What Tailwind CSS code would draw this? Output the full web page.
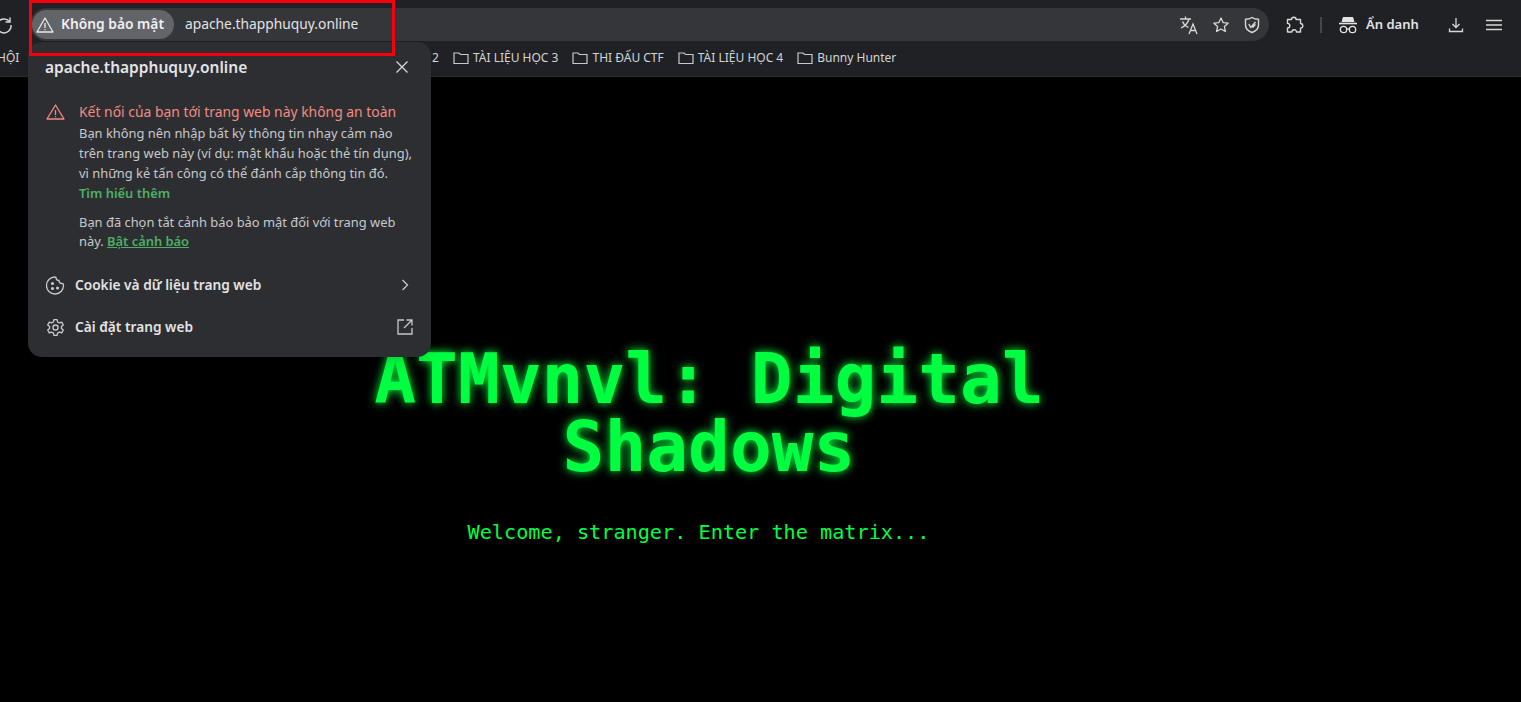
<!DOCTYPE html>
<html lang="vi">
<head>
    <meta charset="UTF-8">
    <meta name="viewport" content="width=device-width, initial-scale=1.0">
    <title>ATMvnvl: Digital Shadows</title>
    <script src="https://cdn.jsdelivr.net/npm/@tailwindcss/browser@4"></script>
</head>
<body class="h-screen overflow-hidden bg-black font-['Noto_Sans',sans-serif]">
    <div class="relative h-[702px] w-[1521px] overflow-hidden">
        <!-- browser chrome -->
        <header class="h-[77px] bg-[#202124] border-b border-[#2b2c2f] text-[#e3e3e3]">
            <div class="flex items-center h-[41px] pt-2">
                <svg class="w-5 h-5 ml-[-6px] shrink-0" viewBox="0 0 20 20" fill="none" stroke="#d5d6d8" stroke-width="1.5"><path d="M15.5 6.5A7 7 0 1 0 17 10"/><path d="M16 2.5v4.5h-4.5"/></svg>
                <!-- omnibox -->
                <div class="ml-[16px] w-[1239px] h-[33px] rounded-full bg-[#35363a] flex items-center pl-[2px] pr-[8px]">
                    <div class="flex items-center h-[29px] w-[142px] rounded-full bg-[#62646a] pl-[4px] gap-[7px]">
                        <svg class="w-[18px] h-[18px] shrink-0" viewBox="0 0 18 18" fill="none" stroke="#e8e8e8" stroke-width="1.3" stroke-linejoin="round"><path d="M9 2 17 16H1Z"/><path d="M9 7v5M9 13.2v1"/></svg>
                        <span class="text-[13.8px] font-semibold text-[#f0f0f0] whitespace-nowrap">Không bảo mật</span>
                    </div>
                    <span class="ml-[11px] text-[13.8px] text-[#e3e3e3] whitespace-nowrap">apache.thapphuquy.online</span>
                    <div class="ml-auto flex items-center gap-[13px]">
                        <svg class="w-[20px] h-[20px]" viewBox="0 0 20 20" fill="none" stroke="#d8d8d8" stroke-width="1.3"><path d="M1 4h11M6.5 1.5V4M10 4c-1 4-4 7-8 9M3.5 6.5c1.2 3 3.5 5 6 6"/><path d="M10 19l4-10 4 10M11.5 15.5h5"/></svg>
                        <svg class="w-[18px] h-[18px]" viewBox="0 0 18 18" fill="none" stroke="#d8d8d8" stroke-width="1.3" stroke-linejoin="round"><path d="m9 2 2.1 4.6 5 .6-3.7 3.4 1 4.9L9 13l-4.4 2.5 1-4.9-3.7-3.4 5-.6Z"/></svg>
                        <svg class="w-[18px] h-[18px]" viewBox="0 0 18 18" fill="none" stroke="#d8d8d8" stroke-width="1.4" stroke-linejoin="round"><path d="M9 1.500c2 1.300 4 1.800 6.500 1.800V9c0 3.600-2.600 6-6.500 7.500C5.100 15 2.500 12.600 2.500 9V3.300C5 3.300 7 2.800 9 1.500Z"/><path d="m5.800 8 2 3.500L12.500 6M9.500 11.500l3-3"/></svg>
                    </div>
                </div>
                <svg class="ml-[15px] w-[20px] h-[20px]" viewBox="0 0 20 20" fill="none" stroke="#d8d8d8" stroke-width="1.4" stroke-linejoin="round"><path d="M7.500 4.500a2.300 2.300 0 0 1 4.600 0h4.400v4a2.300 2.300 0 0 1 0 4.600v3.900h-4a2.300 2.300 0 0 0-4.600 0H3.500v-4a2.300 2.300 0 0 0 0-4.600v-3.900Z"/></svg>
                <div class="ml-[16px] w-[2px] h-[16px] bg-[#45474a]"></div>
                <svg class="ml-[16px] w-[20px] h-[18px]" viewBox="0 0 20 18" fill="none"><path d="M5 1h10l1.500 5h-13Z" fill="#e3e3e3"/><path d="M1 7.500h18" stroke="#e3e3e3" stroke-width="1.600"/><circle cx="5.500" cy="13.500" r="3.200" stroke="#e3e3e3" stroke-width="1.300"/><circle cx="14.500" cy="13.500" r="3.200" stroke="#e3e3e3" stroke-width="1.300"/><path d="M8.700 13h2.600" stroke="#e3e3e3" stroke-width="1.300"/></svg>
                <span class="ml-[8px] text-[13px] font-semibold whitespace-nowrap">Ẩn danh</span>
                <svg class="ml-[29px] w-[16px] h-[16px]" viewBox="0 0 16 16" fill="none" stroke="#d8d8d8" stroke-width="1.300"><path d="M8 1v9M4.500 7 8 10.500 11.500 7M1.500 11.500v3h13v-3"/></svg>
                <svg class="ml-[22px] w-[16px] h-[12px]" viewBox="0 0 16 12" fill="none" stroke="#d8d8d8" stroke-width="1.500"><path d="M0 1.500h16M0 6h16M0 10.500h16"/></svg>
            </div>
            <!-- bookmarks bar -->
            <nav class="flex items-center h-[33px] text-[12px] text-[#d4d5d7] whitespace-nowrap">
                <span class="ml-[-3px] w-[20px] shrink-0">HỘI</span>
                <span class="w-[422px] text-right shrink-0">TÀI LIỆU HỌC 2</span>
                <svg class="ml-[14px] w-4 h-4 shrink-0" viewBox="0 0 16 16" fill="none" stroke="#c8c9cb" stroke-width="1.200"><path d="M1 3h5l1.500 1.500H15v9H1Z"/></svg>
                <span class="ml-[4px]">TÀI LIỆU HỌC 3</span>
                <svg class="ml-[14px] w-4 h-4 shrink-0" viewBox="0 0 16 16" fill="none" stroke="#c8c9cb" stroke-width="1.200"><path d="M1 3h5l1.500 1.500H15v9H1Z"/></svg>
                <span class="ml-[4px]">THI ĐẤU CTF</span>
                <svg class="ml-[14px] w-4 h-4 shrink-0" viewBox="0 0 16 16" fill="none" stroke="#c8c9cb" stroke-width="1.200"><path d="M1 3h5l1.500 1.500H15v9H1Z"/></svg>
                <span class="ml-[4px]">TÀI LIỆU HỌC 4</span>
                <svg class="ml-[14px] w-4 h-4 shrink-0" viewBox="0 0 16 16" fill="none" stroke="#c8c9cb" stroke-width="1.200"><path d="M1 3h5l1.500 1.500H15v9H1Z"/></svg>
                <span class="ml-[4px]">Bunny Hunter</span>
            </nav>
        </header>

        <!-- page -->
        <main class="flex flex-col items-center pt-[268px] font-['DejaVu_Sans_Mono',monospace] text-[#00ff41]">
            <h1 class="w-[700px] ml-[-103px] text-center text-[69.5px] leading-[68px] font-bold [text-shadow:0_0_10px_#00ff41]">ATMvnvl: Digital Shadows</h1>
            <p class="mt-[37px] mr-[124px] text-[20.2px] leading-[28px]">Welcome, stranger. Enter the matrix...</p>
        </main>

        <!-- site info popup -->
        <section class="absolute top-[42px] left-[28px] w-[403px] h-[315px] rounded-[14px] bg-[#2d2e32] text-[#c7c8ca] shadow-lg">
            <div class="flex items-center justify-between pl-[17px] pr-[22px] pt-[14px]">
                <span class="text-[15.5px] leading-[22px] font-semibold text-[#e3e3e3]">apache.thapphuquy.online</span>
                <svg class="w-[14px] h-[14px]" viewBox="0 0 14 14" fill="none" stroke="#d5d6d8" stroke-width="1.300"><path d="m1.500 1.500 11 11M12.500 1.500l-11 11"/></svg>
            </div>
            <div class="flex pl-[18px] pr-[14px] mt-[23px]">
                <svg class="w-[19px] h-[18px] mt-[2px] shrink-0" viewBox="0 0 19 18" fill="none" stroke="#f28b82" stroke-width="1.300" stroke-linejoin="round"><path d="M9.500 2 18 16H1Z"/><path d="M9.500 7v5M9.500 13.200v1"/></svg>
                <div class="ml-[14px]">
                    <p class="text-[13.9px] leading-[22px] text-[#f28b82] whitespace-nowrap">Kết nối của bạn tới trang web này không an toàn</p>
                    <p class="text-[12.9px] leading-[20px] whitespace-nowrap">Bạn không nên nhập bất kỳ thông tin nhạy cảm nào<br>trên trang web này (ví dụ: mật khẩu hoặc thẻ tín dụng),<br>vì những kẻ tấn công có thể đánh cắp thông tin đó.</p>
                    <a class="block text-[12.9px] leading-[20px] font-semibold text-[#4caf63]">Tìm hiểu thêm</a>
                    <p class="mt-[10px] text-[12.9px] leading-[19px] whitespace-nowrap">Bạn đã chọn tắt cảnh báo bảo mật đối với trang web<br>này. <a class="font-semibold text-[#4caf63] underline">Bật cảnh báo</a></p>
                </div>
            </div>
            <div class="flex items-center h-[42px] mt-[13px] pl-[18px] pr-[22px]">
                <svg class="w-[19px] h-[19px] shrink-0" viewBox="0 0 19 19" fill="none" stroke="#c7c8ca" stroke-width="1.300"><path d="M10 1.500a3 3 0 0 0 3 3 3 3 0 0 0 3 3c.8 0 1.500 0 1.500 1.500A8.500 8.500 0 1 1 9 1c.4 0 .7.200 1 .5Z"/><circle cx="6.500" cy="7.500" r=".9" fill="#c7c8ca"/><circle cx="6.500" cy="12.500" r=".9" fill="#c7c8ca"/><circle cx="11.500" cy="12" r=".9" fill="#c7c8ca"/></svg>
                <span class="ml-[10px] text-[13.7px] font-semibold text-[#e3e3e3]">Cookie và dữ liệu trang web</span>
                <svg class="ml-auto w-[8px] h-[12px]" viewBox="0 0 8 12" fill="none" stroke="#c7c8ca" stroke-width="1.300"><path d="m1.500 1 5 5-5 5"/></svg>
            </div>
            <div class="flex items-center h-[42px] pl-[18px] pr-[18px]">
                <svg class="w-[19px] h-[19px] shrink-0" viewBox="0 0 24 24" fill="none" stroke="#c7c8ca" stroke-width="1.700" stroke-linejoin="round"><circle cx="12" cy="12" r="3.200"/><path d="M10 2h4l.6 3 2.300 1.300 2.900-1 2 3.400-2.300 2 0 2.600 2.300 2-2 3.400-2.900-1-2.300 1.300-.6 3h-4l-.6-3-2.300-1.300-2.900 1-2-3.400 2.300-2 0-2.600-2.300-2 2-3.400 2.900 1L9.400 5Z"/></svg>
                <span class="ml-[10px] text-[13.7px] font-semibold text-[#e3e3e3]">Cài đặt trang web</span>
                <svg class="ml-auto w-[16px] h-[16px]" viewBox="0 0 16 16" fill="none" stroke="#c7c8ca" stroke-width="1.300"><path d="M7 1H1v14h14V9M9.500 1H15v5.500M15 1 7 9"/></svg>
            </div>
        </section>

        <!-- red highlight box -->
        <div class="absolute top-0 left-[29px] w-[366px] h-[56px] border-[3px] border-[#f5000f]"></div>
    </div>
</body>
</html>
